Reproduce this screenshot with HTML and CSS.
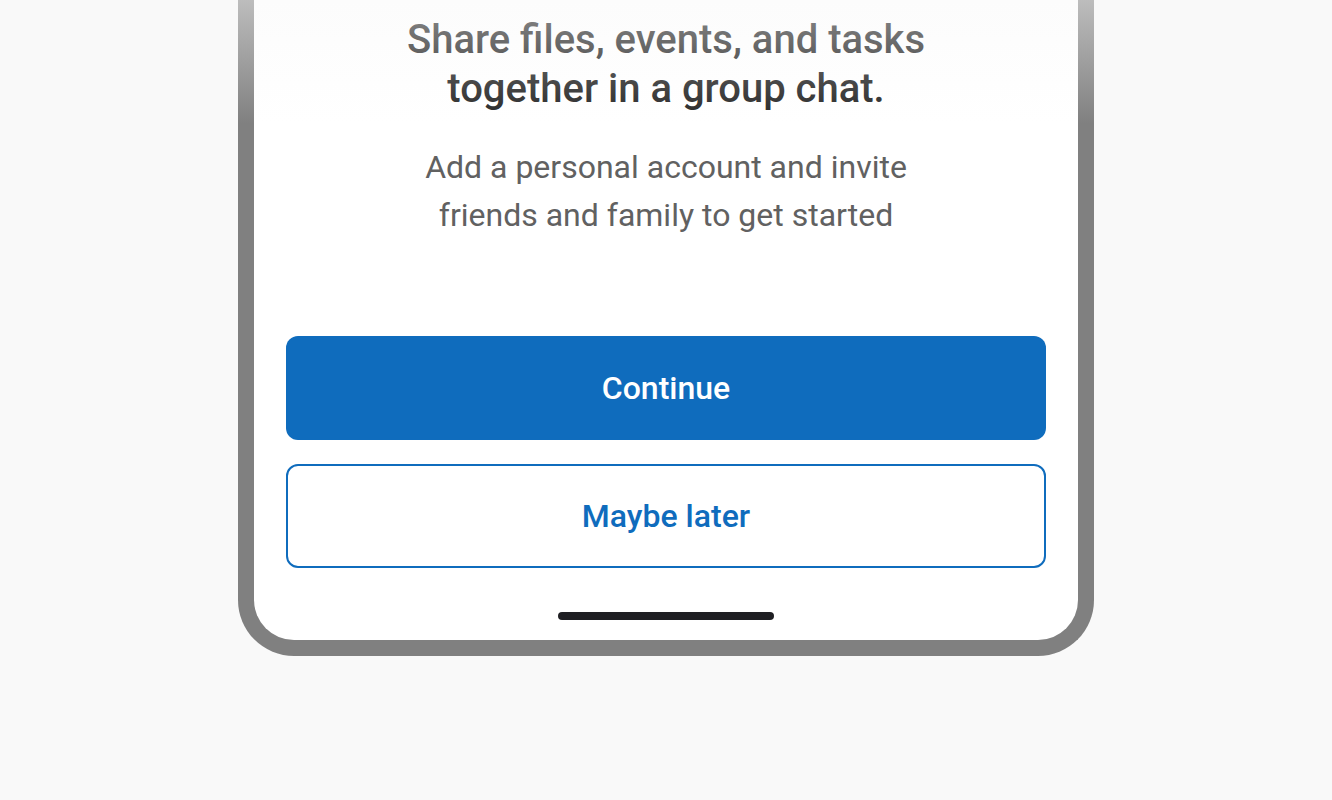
FILE: index.html
```html
<!DOCTYPE html>
<html lang="en">
<head>
<meta charset="utf-8">
<title>Group chat</title>
<link rel="stylesheet" href="styles.css">
</head>
<body>
<div class="page">
  <div class="phone">
    <div class="screen">
      <h1 class="title"><span class="title-light">Share files, events, and tasks</span><br><span class="title-strong">together in a group chat.</span></h1>
      <p class="subtitle">Add a personal account and invite<br>friends and family to get started</p>
      <div class="actions">
        <button class="btn btn-primary">Continue</button>
        <button class="btn btn-outline">Maybe later</button>
      </div>
      <div class="home-indicator"></div>
    </div>
  </div>
  <div class="fade"></div>
</div>
</body>
</html>
```
FILE: styles.css
```css
* { box-sizing: border-box; }
html, body {
  margin: 0;
  padding: 0;
  background: #f9f9f9;
  font-family: Roboto, "Noto Sans", sans-serif;
}
.page {
  position: relative;
  width: 1332px;
  height: 800px;
  display: flex;
  justify-content: center;
  align-items: flex-start;
}
.phone {
  width: 856px;
  height: 656px;
  border: 16px solid #808080;
  border-top: 0;
  border-radius: 0 0 56px 56px;
  background: #808080;
}
.screen {
  height: 100%;
  background: #ffffff;
  border-radius: 0 0 40px 40px;
  padding: 15px 32px 0;
  display: flex;
  flex-direction: column;
  align-items: center;
}
.title {
  margin: 0;
  font-size: 40px;
  line-height: 49px;
  font-weight: 500;
  color: #242424;
  text-align: center;
}
.subtitle {
  margin: 30px 0 0;
  font-size: 32px;
  line-height: 48px;
  font-weight: 400;
  color: #616161;
  text-align: center;
}
.actions {
  margin-top: 97px;
  width: 100%;
  display: flex;
  flex-direction: column;
  gap: 24px;
}
.btn {
  width: 100%;
  height: 104px;
  border-radius: 12px;
  font-family: Roboto, "Noto Sans", sans-serif;
  font-size: 32px;
  font-weight: 500;
  cursor: pointer;
}
.btn-primary {
  background: #0f6cbd;
  color: #ffffff;
  border: 0;
}
.btn-outline {
  background: #ffffff;
  color: #0f6cbd;
  border: 2px solid #0f6cbd;
}
.home-indicator {
  margin-top: 44px;
  width: 216px;
  height: 8px;
  border-radius: 4px;
  background: #1f1f23;
}
.fade {
  position: absolute;
  top: 0;
  left: 0;
  right: 0;
  height: 124px;
  background: linear-gradient(to bottom, rgba(249,249,249,0.5), rgba(249,249,249,0));
  pointer-events: none;
}
```
